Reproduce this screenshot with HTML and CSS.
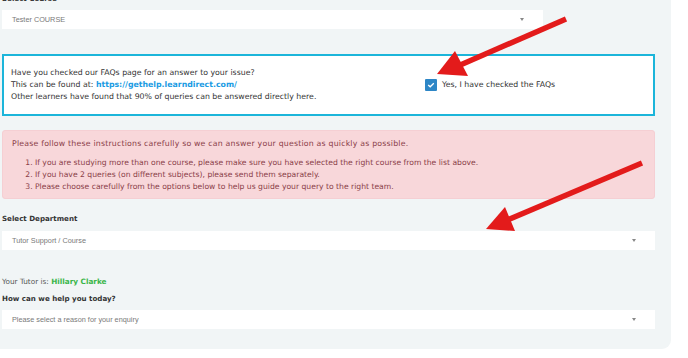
FILE: index.html
```html
<!DOCTYPE html>
<html>
<head>
<meta charset="utf-8">
<link rel="stylesheet" href="styles.css">
</head>
<body>
<div class="panel">
  <div class="label label-top">Select Course</div>
  <div class="select select-short"><span>Tester COURSE</span><i class="caret"></i></div>

  <div class="faq">
    <div class="faq-text">
      <div>Have you checked our FAQs page for an answer to your issue?</div>
      <div>This can be found at: <a class="link">https://gethelp.learndirect.com/</a></div>
      <div>Other learners have found that 90% of queries can be answered directly here.</div>
    </div>
    <label class="check">
      <span class="box"><svg width="8" height="6" viewBox="0 0 8 6"><path d="M1.2 3 L3.2 4.8 L6.8 1.2" fill="none" stroke="#fff" stroke-width="1.3"/></svg></span>
      <span>Yes, I have checked the FAQs</span>
    </label>
  </div>

  <div class="alert">
    <div class="alert-lead">Please follow these instructions carefully so we can answer your question as quickly as possible.</div>
    <ol class="steps">
      <li>If you are studying more than one course, please make sure you have selected the right course from the list above.</li>
      <li>If you have 2 queries (on different subjects), please send them separately.</li>
      <li>Please choose carefully from the options below to help us guide your query to the right team.</li>
    </ol>
  </div>

  <div class="label label-dept">Select Department</div>
  <div class="select"><span>Tutor Support / Course</span><i class="caret"></i></div>

  <div class="tutor">Your Tutor is: <b class="name">Hillary Clarke</b></div>
  <div class="label label-help">How can we help you today?</div>
  <div class="select"><span>Please select a reason for your enquiry</span><i class="caret"></i></div>
</div>

<svg class="arrows" width="688" height="358" viewBox="0 0 688 358">
  <line x1="566" y1="19" x2="458" y2="66" stroke="#e31b1b" stroke-width="5.5"/>
  <polygon points="437,74 455,51 468,76" fill="#e31b1b"/>
  <line x1="642" y1="163" x2="505" y2="221" stroke="#e31b1b" stroke-width="5.5"/>
  <polygon points="486,229 505,207 515,231" fill="#e31b1b"/>
</svg>
</body>
</html>
```

FILE: styles.css
```css
* { box-sizing: border-box; }
html, body { margin: 0; padding: 0; background: #fff; }
body {
  width: 688px;
  height: 358px;
  overflow: hidden;
  position: relative;
  font-family: "DejaVu Sans", sans-serif;
  color: #333;
}
.panel {
  width: 671px;
  height: 349px;
  background: #f1f5f6;
  border-bottom-right-radius: 9px;
  padding: 0 16px 0 2px;
  display: flex;
  flex-direction: column;
}
.label {
  font-weight: bold;
  font-size: 7.1px;
  line-height: 12px;
  height: 12px;
  color: #333;
}
.label-top { margin-top: -7px; margin-bottom: 5px; }
.label-dept { margin-top: 14px; margin-bottom: 6px; }
.label-help { margin-top: 5px; margin-bottom: 5px; }
.select {
  height: 19px;
  background: #fff;
  display: flex;
  align-items: center;
  justify-content: space-between;
  padding: 0 19px 0 10px;
  font-family: "Liberation Sans", Arial, sans-serif;
  font-size: 7.3px;
  color: #7a7a7a;
}
.select-short { width: 541px; }
.caret {
  width: 0; height: 0;
  border-left: 2.5px solid transparent;
  border-right: 2.5px solid transparent;
  border-top: 3px solid #888;
}
.faq {
  margin-top: 25px;
  height: 62px;
  border: 2px solid #1cb5da;
  background: #fff;
  display: grid;
  grid-template-columns: 414px 1fr;
  align-items: center;
  padding-left: 7px;
  font-size: 7.8px;
  line-height: 12px;
  color: #333;
}
.faq-text { padding-bottom: 1px; }
.link { color: #1a9be3; font-weight: 600; }
.check { display: flex; align-items: center; gap: 5px; font-size: 7.8px; }
.box {
  width: 12px; height: 12px;
  background: #2d86c6;
  border-radius: 1px;
  display: flex; align-items: center; justify-content: center;
}
.alert {
  margin-top: 14px;
  height: 69px;
  background: #f8d7da;
  border: 1px solid #f5cfd3;
  border-radius: 3px;
  padding: 7px 9px 0;
  font-size: 7.65px;
  line-height: 12px;
  color: #8a4048;
}
.alert-lead { font-size: 7.8px; letter-spacing: 0.2px; }
.steps { margin: 7px 0 0; padding-left: 23px; }
.tutor {
  margin-top: 26px;
  font-size: 7.3px;
  line-height: 12px;
  color: #555;
}
.name { color: #3ab54a; }
.arrows { position: absolute; left: 0; top: 0; pointer-events: none; }
```
